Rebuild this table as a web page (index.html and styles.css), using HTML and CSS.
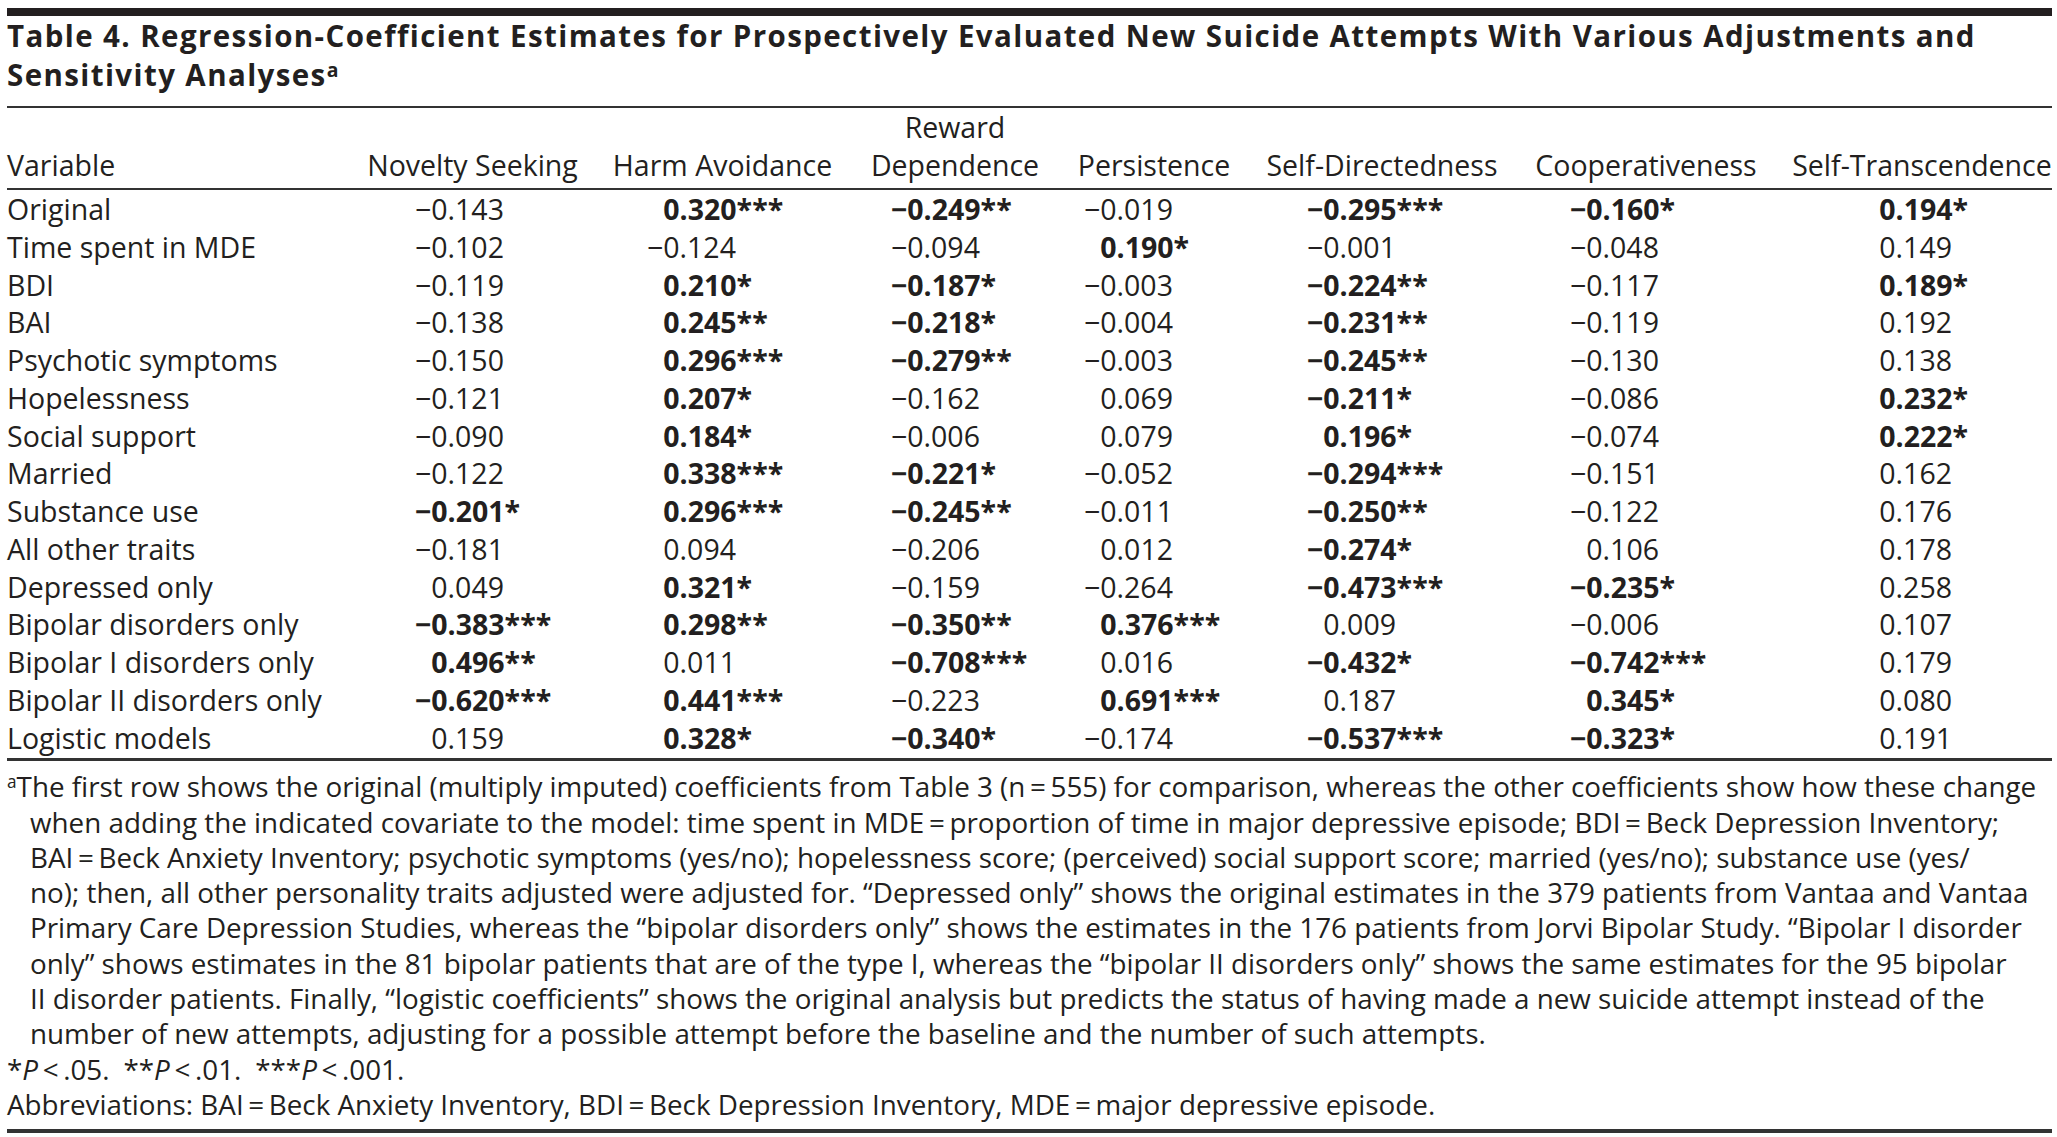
FILE: index.html
```html
<!DOCTYPE html>
<html lang="en">
<head>
<meta charset="utf-8">
<title>Table 4</title>
<link rel="stylesheet" href="styles.css">
</head>
<body>
<div class="page">
  <div class="topbar"></div>
  <h1 class="title">Table 4. Regression-Coefficient Estimates for Prospectively Evaluated New Suicide Attempts With Various Adjustments and<br>Sensitivity Analyses<sup>a</sup></h1>
  <table class="data">
    <colgroup>
      <col class="c-var"><col class="c-ns"><col class="c-ha"><col class="c-rd"><col class="c-pe"><col class="c-sd"><col class="c-co"><col class="c-st">
    </colgroup>
    <thead>
      <tr>
        <th class="var">Variable</th>
        <th>Novelty Seeking</th>
        <th>Harm Avoidance</th>
        <th>Reward<br>Dependence</th>
        <th>Persistence</th>
        <th>Self-Directedness</th>
        <th>Cooperativeness</th>
        <th class="last">Self-Transcendence</th>
      </tr>
    </thead>
    <tbody>
      <tr><td>Original</td><td>−0.143</td><td><b class="p">0.320***</b></td><td><b>−0.249**</b></td><td>−0.019</td><td><b>−0.295***</b></td><td><b>−0.160*</b></td><td><b class="p">0.194*</b></td></tr>
      <tr><td>Time spent in MDE</td><td>−0.102</td><td>−0.124</td><td>−0.094</td><td><b class="p">0.190*</b></td><td>−0.001</td><td>−0.048</td><td><span class="p">0.149</span></td></tr>
      <tr><td>BDI</td><td>−0.119</td><td><b class="p">0.210*</b></td><td><b>−0.187*</b></td><td>−0.003</td><td><b>−0.224**</b></td><td>−0.117</td><td><b class="p">0.189*</b></td></tr>
      <tr><td>BAI</td><td>−0.138</td><td><b class="p">0.245**</b></td><td><b>−0.218*</b></td><td>−0.004</td><td><b>−0.231**</b></td><td>−0.119</td><td><span class="p">0.192</span></td></tr>
      <tr><td>Psychotic symptoms</td><td>−0.150</td><td><b class="p">0.296***</b></td><td><b>−0.279**</b></td><td>−0.003</td><td><b>−0.245**</b></td><td>−0.130</td><td><span class="p">0.138</span></td></tr>
      <tr><td>Hopelessness</td><td>−0.121</td><td><b class="p">0.207*</b></td><td>−0.162</td><td><span class="p">0.069</span></td><td><b>−0.211*</b></td><td>−0.086</td><td><b class="p">0.232*</b></td></tr>
      <tr><td>Social support</td><td>−0.090</td><td><b class="p">0.184*</b></td><td>−0.006</td><td><span class="p">0.079</span></td><td><b class="p">0.196*</b></td><td>−0.074</td><td><b class="p">0.222*</b></td></tr>
      <tr><td>Married</td><td>−0.122</td><td><b class="p">0.338***</b></td><td><b>−0.221*</b></td><td>−0.052</td><td><b>−0.294***</b></td><td>−0.151</td><td><span class="p">0.162</span></td></tr>
      <tr><td>Substance use</td><td><b>−0.201*</b></td><td><b class="p">0.296***</b></td><td><b>−0.245**</b></td><td>−0.011</td><td><b>−0.250**</b></td><td>−0.122</td><td><span class="p">0.176</span></td></tr>
      <tr><td>All other traits</td><td>−0.181</td><td><span class="p">0.094</span></td><td>−0.206</td><td><span class="p">0.012</span></td><td><b>−0.274*</b></td><td><span class="p">0.106</span></td><td><span class="p">0.178</span></td></tr>
      <tr><td>Depressed only</td><td><span class="p">0.049</span></td><td><b class="p">0.321*</b></td><td>−0.159</td><td>−0.264</td><td><b>−0.473***</b></td><td><b>−0.235*</b></td><td><span class="p">0.258</span></td></tr>
      <tr><td>Bipolar disorders only</td><td><b>−0.383***</b></td><td><b class="p">0.298**</b></td><td><b>−0.350**</b></td><td><b class="p">0.376***</b></td><td><span class="p">0.009</span></td><td>−0.006</td><td><span class="p">0.107</span></td></tr>
      <tr><td>Bipolar I disorders only</td><td><b class="p">0.496**</b></td><td><span class="p">0.011</span></td><td><b>−0.708***</b></td><td><span class="p">0.016</span></td><td><b>−0.432*</b></td><td><b>−0.742***</b></td><td><span class="p">0.179</span></td></tr>
      <tr><td>Bipolar II disorders only</td><td><b>−0.620***</b></td><td><b class="p">0.441***</b></td><td>−0.223</td><td><b class="p">0.691***</b></td><td><span class="p">0.187</span></td><td><b class="p">0.345*</b></td><td><span class="p">0.080</span></td></tr>
      <tr><td>Logistic models</td><td><span class="p">0.159</span></td><td><b class="p">0.328*</b></td><td><b>−0.340*</b></td><td>−0.174</td><td><b>−0.537***</b></td><td><b>−0.323*</b></td><td><span class="p">0.191</span></td></tr>
    </tbody>
  </table>
  <div class="notes">
    <p class="fn"><sup>a</sup>The first row shows the original (multiply imputed) coefficients from Table 3 (n&thinsp;=&thinsp;555) for comparison, whereas the other coefficients show how these change<br>when adding the indicated covariate to the model: time spent in MDE&thinsp;=&thinsp;proportion of time in major depressive episode; BDI&thinsp;=&thinsp;Beck Depression Inventory;<br>BAI&thinsp;=&thinsp;Beck Anxiety Inventory; psychotic symptoms (yes/no); hopelessness score; (perceived) social support score; married (yes/no); substance use (yes/<br>no); then, all other personality traits adjusted were adjusted for. “Depressed only” shows the original estimates in the 379 patients from Vantaa and Vantaa<br>Primary Care Depression Studies, whereas the “bipolar disorders only” shows the estimates in the 176 patients from Jorvi Bipolar Study. “Bipolar I disorder<br>only” shows estimates in the 81 bipolar patients that are of the type I, whereas the “bipolar II disorders only” shows the same estimates for the 95 bipolar<br>II disorder patients. Finally, “logistic coefficients” shows the original analysis but predicts the status of having made a new suicide attempt instead of the<br>number of new attempts, adjusting for a possible attempt before the baseline and the number of such attempts.</p>
    <p class="sig">*<i>P</i>&thinsp;&lt;&thinsp;.05.&ensp;**<i>P</i>&thinsp;&lt;&thinsp;.01.&ensp;***<i>P</i>&thinsp;&lt;&thinsp;.001.</p>
    <p class="abbr">Abbreviations: BAI&thinsp;=&thinsp;Beck Anxiety Inventory, BDI&thinsp;=&thinsp;Beck Depression Inventory, MDE&thinsp;=&thinsp;major depressive episode.</p>
  </div>
</div>
</body>
</html>
```

FILE: styles.css
```css
html, body {
  margin: 0;
  padding: 0;
  background: #ffffff;
}

body {
  font-family: "Open Sans", "Liberation Sans", sans-serif;
  color: #231f20;
}

.page {
  padding: 8px 5px 0 7px;
}

.topbar {
  height: 8px;
  background: #231f20;
}

.title {
  margin: 1px 0 0 0;
  padding: 0 0 12px 0;
  font-size: 29.5px;
  line-height: 38.5px;
  letter-spacing: 1.4px;
  font-weight: 700;
  border-bottom: 2px solid #333;
  white-space: nowrap;
}

.title sup {
  font-size: 0.66em;
  line-height: 0;
  vertical-align: 0.45em;
  letter-spacing: 0;
}

.fn sup {
  font-size: 0.62em;
  line-height: 0;
  vertical-align: 0.5em;
}

.data {
  width: 100%;
  table-layout: fixed;
  border-collapse: collapse;
  font-size: 28.5px;
}

.c-var { width: 343px; }
.c-ns { width: 245px; }
.c-ha { width: 255px; }
.c-rd { width: 210px; }
.c-pe { width: 188px; }
.c-sd { width: 268px; }
.c-co { width: 260px; }
.c-st { width: 276px; }

.data th {
  font-weight: 400;
  line-height: 38px;
  padding: 0 0 4px 0;
  text-align: center;
  vertical-align: bottom;
  white-space: nowrap;
  border-bottom: 2px solid #333;
}

.data th.var {
  text-align: left;
}

.data th.last {
  padding-left: 16px;
}

.data td {
  line-height: 37.75px;
  padding: 0;
  white-space: nowrap;
  text-align: left;
}

.data tbody tr:first-child td {
  padding-top: 1px;
}

.data tbody tr:last-child td {
  padding-bottom: 1px;
  border-bottom: 3px solid #333;
}

.data td:nth-child(2) { padding-left: 65px; }
.data td:nth-child(3) { padding-left: 52px; }
.data td:nth-child(4) { padding-left: 41px; }
.data td:nth-child(5) { padding-left: 24px; }
.data td:nth-child(6) { padding-left: 59px; }
.data td:nth-child(7) { padding-left: 54px; }
.data td:nth-child(8) { padding-left: 87px; }

.data b {
  font-weight: 700;
}

.p {
  margin-left: 0.572em;
}

.notes {
  padding: 8px 0 7px 0;
  font-size: 27.8px;
  line-height: 35.3px;
  border-bottom: 4px solid #333;
}

.notes p {
  margin: 0;
  white-space: nowrap;
}

.fn {
  padding-left: 23px;
  text-indent: -23px;
}
```
